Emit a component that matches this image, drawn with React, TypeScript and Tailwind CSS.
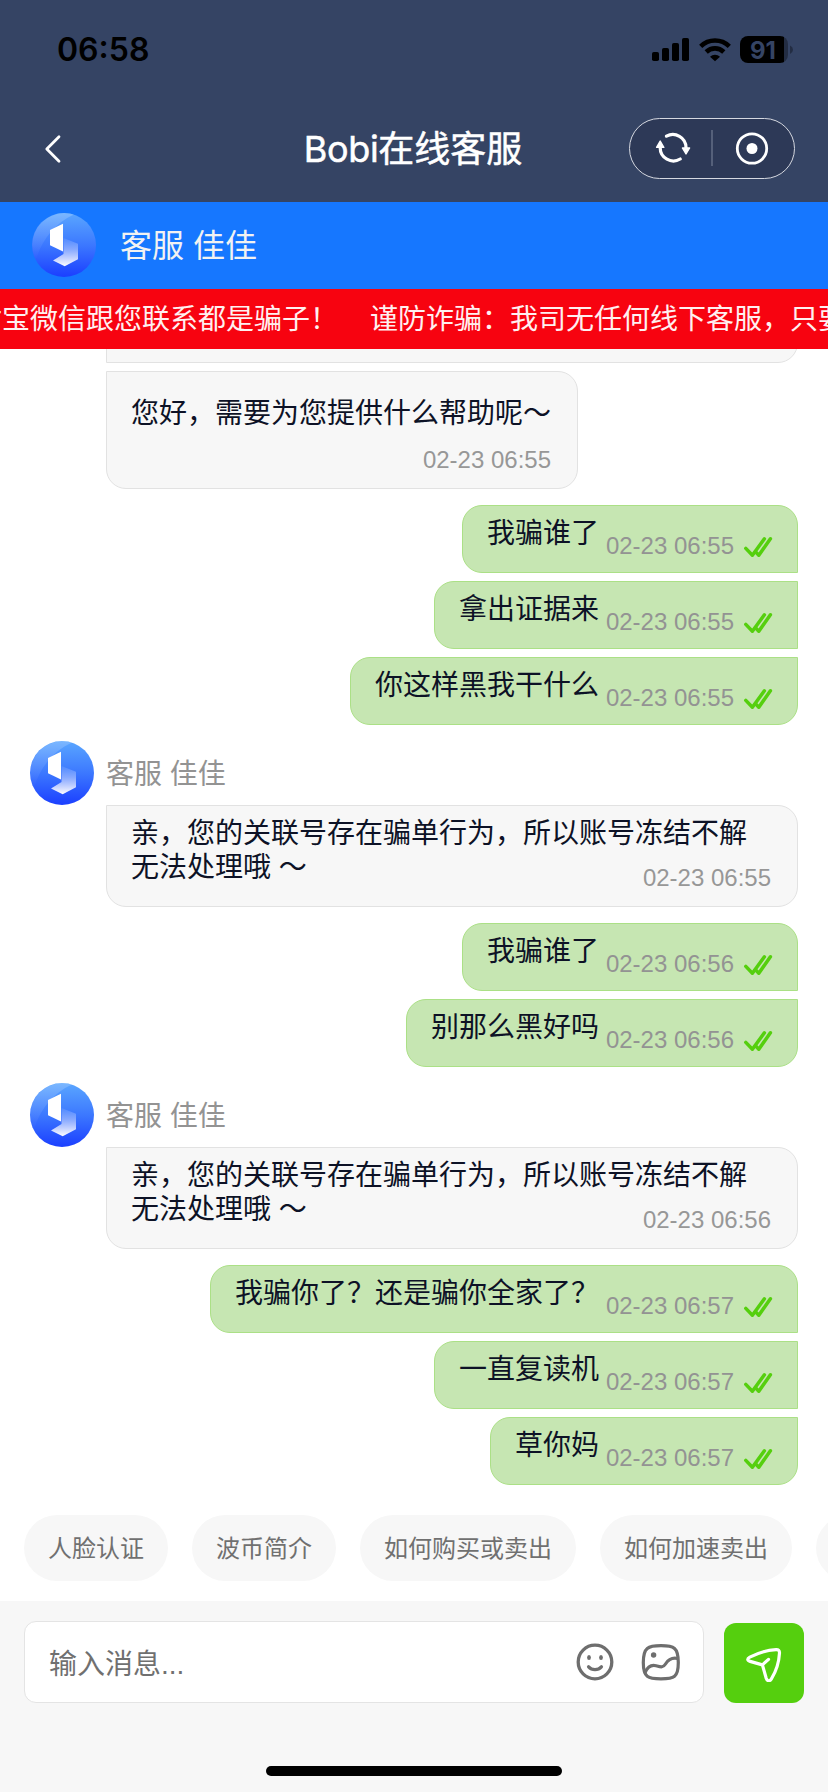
import React from "react";

type Side = "agent" | "user";
interface Message {
  text: string[];
  time: string;
}
interface Group {
  side: Side;
  showName?: boolean;
  tall?: boolean;
  messages: Message[];
}

const groups: Group[] = [
  {
    side: "agent",
    tall: true,
    messages: [{ text: ["您好，需要为您提供什么帮助呢～"], time: "02-23 06:55" }],
  },
  {
    side: "user",
    messages: [
      { text: ["我骗谁了"], time: "02-23 06:55" },
      { text: ["拿出证据来"], time: "02-23 06:55" },
      { text: ["你这样黑我干什么"], time: "02-23 06:55" },
    ],
  },
  {
    side: "agent",
    showName: true,
    messages: [
      { text: ["亲，您的关联号存在骗单行为，所以账号冻结不解", "无法处理哦 ～"], time: "02-23 06:55" },
    ],
  },
  {
    side: "user",
    messages: [
      { text: ["我骗谁了"], time: "02-23 06:56" },
      { text: ["别那么黑好吗"], time: "02-23 06:56" },
    ],
  },
  {
    side: "agent",
    showName: true,
    messages: [
      { text: ["亲，您的关联号存在骗单行为，所以账号冻结不解", "无法处理哦 ～"], time: "02-23 06:56" },
    ],
  },
  {
    side: "user",
    messages: [
      { text: ["我骗你了？还是骗你全家了？"], time: "02-23 06:57" },
      { text: ["一直复读机"], time: "02-23 06:57" },
      { text: ["草你妈"], time: "02-23 06:57" },
    ],
  },
];

const quickReplies = ["人脸认证", "波币简介", "如何购买或卖出", "如何加速卖出"];

function Avatar({ id }: { id: string }) {
  return (
    <svg width="64" height="64" viewBox="0 0 64 64" className="block shrink-0">
      <defs>
        <linearGradient id={`${id}-bg`} x1="0" y1="0" x2="0" y2="1">
          <stop offset="0" stopColor="#5aa6ff" />
          <stop offset="0.5" stopColor="#3c78ff" />
          <stop offset="1" stopColor="#1b3fff" />
        </linearGradient>
        <linearGradient id={`${id}-shade`} x1="0" y1="0" x2="0" y2="1">
          <stop offset="0" stopColor="#fff" stopOpacity="0.08" />
          <stop offset="0.4" stopColor="#fff" stopOpacity="0.4" />
          <stop offset="1" stopColor="#fff" />
        </linearGradient>
        <linearGradient id={`${id}-gloss`} x1="0" y1="0" x2="0" y2="1">
          <stop offset="0" stopColor="#fff" stopOpacity="0.2" />
          <stop offset="1" stopColor="#fff" stopOpacity="0" />
        </linearGradient>
      </defs>
      <circle cx="32" cy="32" r="32" fill={`url(#${id}-bg)`} />
      <path d="M42 1.6A32 32 0 0 0 4 47C9 28 23 10 42 1.6Z" fill={`url(#${id}-gloss)`} />
      <path d="M31.5 25 46 30.8V46.3L32.7 53.3 21 47.6 31.5 41Z" fill={`url(#${id}-shade)`} />
      <path d="M18 17 31 10.8V38.4L18 32.2Z" fill="#fff" />
    </svg>
  );
}

function DoubleCheck() {
  return (
    <svg
      width="28"
      height="20"
      viewBox="0 0 28 20"
      fill="none"
      stroke="#55cf0e"
      strokeWidth="3.5"
      strokeLinecap="round"
      strokeLinejoin="round"
      className="block shrink-0 overflow-visible"
    >
      <path d="M1.8 11.4 8.4 18.2 20.4 1.8" />
      <path d="M11.4 14.6 14.8 18.2 26.4 1.8" />
    </svg>
  );
}

function StatusBar() {
  return (
    <div className="flex h-[96px] items-start justify-between pl-[57px] pr-[34px]">
      <span className="mt-[30px] font-[Inter] text-[32px] leading-[40px] font-semibold text-black">06:58</span>
      <div className="mt-[36px] flex">
        <svg width="37" height="27" viewBox="0 0 37 27" className="block">
          <rect x="0" y="16" width="7" height="9" rx="1.8" />
          <rect x="10" y="12" width="7" height="13" rx="1.8" />
          <rect x="20" y="7" width="7" height="18" rx="1.8" />
          <rect x="30" y="2" width="7" height="23" rx="1.8" />
        </svg>
        <svg width="32" height="27" viewBox="0 0 32 27" fill="none" stroke="#000" strokeWidth="4.6" className="ml-[10px] block">
          <path d="M1.7 10.3a20.6 20.6 0 0 1 28.6 0" />
          <path d="M7.2 16a12.6 12.6 0 0 1 17.6 0" />
          <path d="M11 20.8 16 25.3 21 20.8a7.2 7.2 0 0 0-10 0Z" fill="#000" stroke="none" />
        </svg>
        <div className="ml-[9px] flex h-[27px] w-[48px] items-center justify-center overflow-hidden rounded-[8px] bg-[linear-gradient(90deg,#000_44px,#232d43_44px)] pr-[2px]">
          <span className="mt-[1px] font-[Inter] text-[24px] leading-[27px] font-bold text-[#354464]">91</span>
        </div>
        <svg width="4" height="27" viewBox="0 0 4 27" className="ml-[2px] block">
          <path d="M0 9.5q3 1.5 3 4.2t-3 4.2Z" fill="#232d43" />
        </svg>
      </div>
    </div>
  );
}

function NavBar() {
  return (
    <div className="grid h-[106px] grid-cols-[1fr_auto_1fr] items-center">
      <svg
        width="18"
        height="30"
        viewBox="0 0 18 30"
        fill="none"
        stroke="#fff"
        strokeWidth="2.8"
        strokeLinecap="round"
        strokeLinejoin="round"
        className="mb-[1px] ml-[44px] block"
      >
        <path d="M15 2.8 2.8 15 15 27.2" />
      </svg>
      <h1 className="flex items-baseline text-[36px] leading-[44px] font-normal text-white [-webkit-text-stroke:0.5px_white]">
        <span className="-ml-[2px] font-[Inter] tracking-[-0.3px]">Bobi</span>
        <span>在线客服</span>
      </h1>
      <div className="mr-[33px] mb-[2px] flex h-[61px] w-[166px] items-center justify-self-end rounded-full border border-[#d5d8e0] bg-[#2d3957]">
        <div className="flex flex-1 justify-center pl-1">
          <svg width="36" height="32" viewBox="0 0 36 32" fill="none" stroke="#fff" strokeWidth="3.2" className="block" strokeLinecap="round">
            <path d="M11.5 4.2A13.2 13.2 0 0 1 31 15.6v2" />
            <path d="M25.2 27A13.2 13.2 0 0 1 5.200 15.600v-1" />
            <path d="M27.400 16h7.200L31 22Z" fill="#fff" strokeWidth="1.400" strokeLinejoin="round" />
            <path d="M1.600 15.400h7.200L5.200 9Z" fill="#fff" strokeWidth="1.400" strokeLinejoin="round" />
          </svg>
        </div>
        <div className="h-[36px] w-[2px] bg-[#55607a]" />
        <div className="flex flex-1 justify-center pr-1">
          <svg width="34" height="34" viewBox="0 0 34 34" className="block">
            <circle cx="17" cy="17.5" r="14.7" fill="none" stroke="#fff" strokeWidth="2.8" />
            <circle cx="17" cy="17.5" r="5.5" fill="#fff" />
          </svg>
        </div>
      </div>
    </div>
  );
}

function AgentBubble({ message, tall }: { message: Message; tall?: boolean }) {
  return (
    <div
      className={
        tall
          ? "ml-[106px] flex h-[118px] w-[472px] flex-col rounded-[20px] rounded-tl-none border border-[#e2e2e2] bg-[#f7f7f7] pt-[25px] pr-[26px] pl-[24px]"
          : "ml-[106px] flex h-[102px] w-[692px] flex-col rounded-[20px] rounded-tl-none border border-[#e2e2e2] bg-[#f7f7f7] pt-[11px] pr-[26px] pl-[24px]"
      }
    >
      {message.text.map((line) => (
        <p key={line} className="text-[28px] leading-[34px] whitespace-nowrap text-[#0d1226]">
          {line}
        </p>
      ))}
      <span className={tall ? "mt-[15px] self-end text-[24px] leading-[28px] text-[#979797]" : "-mt-[21px] self-end text-[24px] leading-[28px] text-[#979797]"}>
        {message.time}
      </span>
    </div>
  );
}

function UserBubble({ message, index, count }: { message: Message; index: number; count: number }) {
  const top = index === 0 ? "rounded-tr-[20px]" : "rounded-tr-none";
  const bottom = index === count - 1 ? "rounded-br-[20px]" : "rounded-br-none";
  return (
    <div
      className={`mr-[30px] flex h-[68px] items-start rounded-l-[20px] border border-[#abe086] bg-[#c6e6b2] pr-[25px] pl-[24px] ${top} ${bottom}`}
    >
      <span className="mt-[11px] text-[28px] leading-[34px] whitespace-nowrap text-[#0d1226]">{message.text[0]}</span>
      <span className="mt-[26px] ml-[7px] text-[24px] leading-[28px] whitespace-nowrap text-[#939393]">{message.time}</span>
      <div className="mt-[31px] ml-[10px]">
        <DoubleCheck />
      </div>
    </div>
  );
}

function SmileIcon() {
  return (
    <svg width="38" height="38" viewBox="0 0 38 38" fill="none" stroke="#6e6e6e" strokeWidth="3.3" strokeLinecap="round" className="block">
      <circle cx="19" cy="19" r="16.8" />
      <path d="M12.6 23.8c3.4 3.7 9.4 3.7 12.8 0" />
      <ellipse cx="13" cy="14.5" rx="1.9" ry="2.6" fill="#6e6e6e" stroke="none" />
      <ellipse cx="25" cy="14.5" rx="1.9" ry="2.6" fill="#6e6e6e" stroke="none" />
    </svg>
  );
}

function PictureIcon() {
  return (
    <svg width="40" height="38" viewBox="0 0 40 38" fill="none" stroke="#6e6e6e" strokeWidth="3.2" strokeLinecap="round" className="block">
      <path d="M20 2.6C33 2.6 37.3 4.500 37.300 19.500S33 35.800 20 35.800 2.300 34.500 2.300 19.500 7 2.600 20 2.600Z" />
      <path d="M4 29.500c3-6.500 6.500-8 11-6.800 4.500 1.200 7 2.300 9.500-1.700 3.500-5.500 7-6.500 12-5.500" />
      <circle cx="12.600" cy="12" r="2.700" fill="#6e6e6e" stroke="none" />
    </svg>
  );
}

function SendIcon() {
  return (
    <svg
      width="38"
      height="38"
      viewBox="0 0 38 38"
      fill="none"
      stroke="#fff"
      strokeWidth="3.2"
      strokeLinecap="round"
      strokeLinejoin="round"
      className="block"
    >
      <path d="M17.400 20.900 5.100 17.400C2 16.500 2 14.600 4.800 13.100 12 9.500 21 6.200 31 5.700 33.500 5.600 34.600 6.600 34.500 9 34 18 31 27.500 26.400 34.800 24.700 37.600 22.300 37.400 21.200 34.200Z" />
      <path d="M17.400 20.900 23.500 15.400" />
    </svg>
  );
}

export default function App() {
  return (
    <div
      lang="zh-CN"
      className="flex h-[1792px] w-[828px] flex-col overflow-hidden bg-white font-['Liberation_Sans','Noto_Sans_CJK_SC',sans-serif]"
    >
      <header className="shrink-0 bg-[#354464]">
        <StatusBar />
        <NavBar />
      </header>

      <div className="flex h-[87px] shrink-0 items-center bg-[#1677ff] pb-[1px] pl-[32px]">
        <Avatar id="top" />
        <span className="mt-[2px] ml-[24px] text-[32px] leading-[40px] text-[#f2f2f2]">客服 佳佳</span>
      </div>

      <div className="flex h-[60px] shrink-0 items-center gap-[32px] overflow-hidden bg-[#f70310] pt-[2px] text-[28px] leading-[34px] whitespace-nowrap text-[#fff0f0]">
        <span className="-ml-[26px]">付宝微信跟您联系都是骗子！</span>
        <span>谨防诈骗：我司无任何线下客服，只要</span>
      </div>

      <main className="flex min-h-0 flex-1 flex-col overflow-hidden">
        <div className="mb-[8px] ml-[106px] h-[14px] w-[692px] shrink-0 overflow-hidden">
          <div className="-mt-[46px] h-[60px] rounded-br-[20px] border border-[#e2e2e2] bg-[#f7f7f7]" />
        </div>
        <div className="flex flex-col gap-[16px]">
          {groups.map((group, g) =>
            group.side === "agent" ? (
              <section key={g}>
                {group.showName && (
                  <div className="flex h-[64px] items-center pl-[30px]">
                    <Avatar id={`agent-${g}`} />
                    <span className="mt-[3px] ml-[12px] text-[28px] leading-[34px] text-[#939393]">客服 佳佳</span>
                  </div>
                )}
                {group.messages.map((m, i) => (
                  <AgentBubble key={i} message={m} tall={group.tall} />
                ))}
              </section>
            ) : (
              <section key={g} className="flex flex-col items-end gap-[8px]">
                {group.messages.map((m, i) => (
                  <UserBubble key={i} message={m} index={i} count={group.messages.length} />
                ))}
              </section>
            )
          )}
        </div>
      </main>

      <div className="flex h-[86px] shrink-0 gap-[24px] overflow-hidden pl-[24px]">
        {quickReplies.map((q) => (
          <button
            key={q}
            className="h-[66px] shrink-0 rounded-full bg-[#f7f7f7] px-[24px] text-[24px] leading-[68px] text-[#707070]"
          >
            {q}
          </button>
        ))}
        <button className="h-[66px] w-[144px] shrink-0 rounded-full bg-[#f7f7f7]" />
      </div>

      <footer className="flex h-[191px] shrink-0 flex-col items-center justify-between bg-[#f7f7f7] pt-[20px] pb-[16px]">
        <div className="flex w-full items-end gap-[20px] px-[24px]">
          <div className="flex h-[82px] flex-1 items-center rounded-[12px] border border-[#e4e4e4] bg-white pr-[22px] pl-[24px]">
            <span className="mt-[6px] flex-1 text-[28px] leading-[34px] text-[#707070]">输入消息...</span>
            <SmileIcon />
            <div className="ml-[27px]">
              <PictureIcon />
            </div>
          </div>
          <button className="flex h-[80px] w-[80px] items-center justify-center rounded-[12px] bg-[#55cf0e]">
            <SendIcon />
          </button>
        </div>
        <div className="h-[10px] w-[296px] rounded-full bg-black" />
      </footer>
    </div>
  );
}
